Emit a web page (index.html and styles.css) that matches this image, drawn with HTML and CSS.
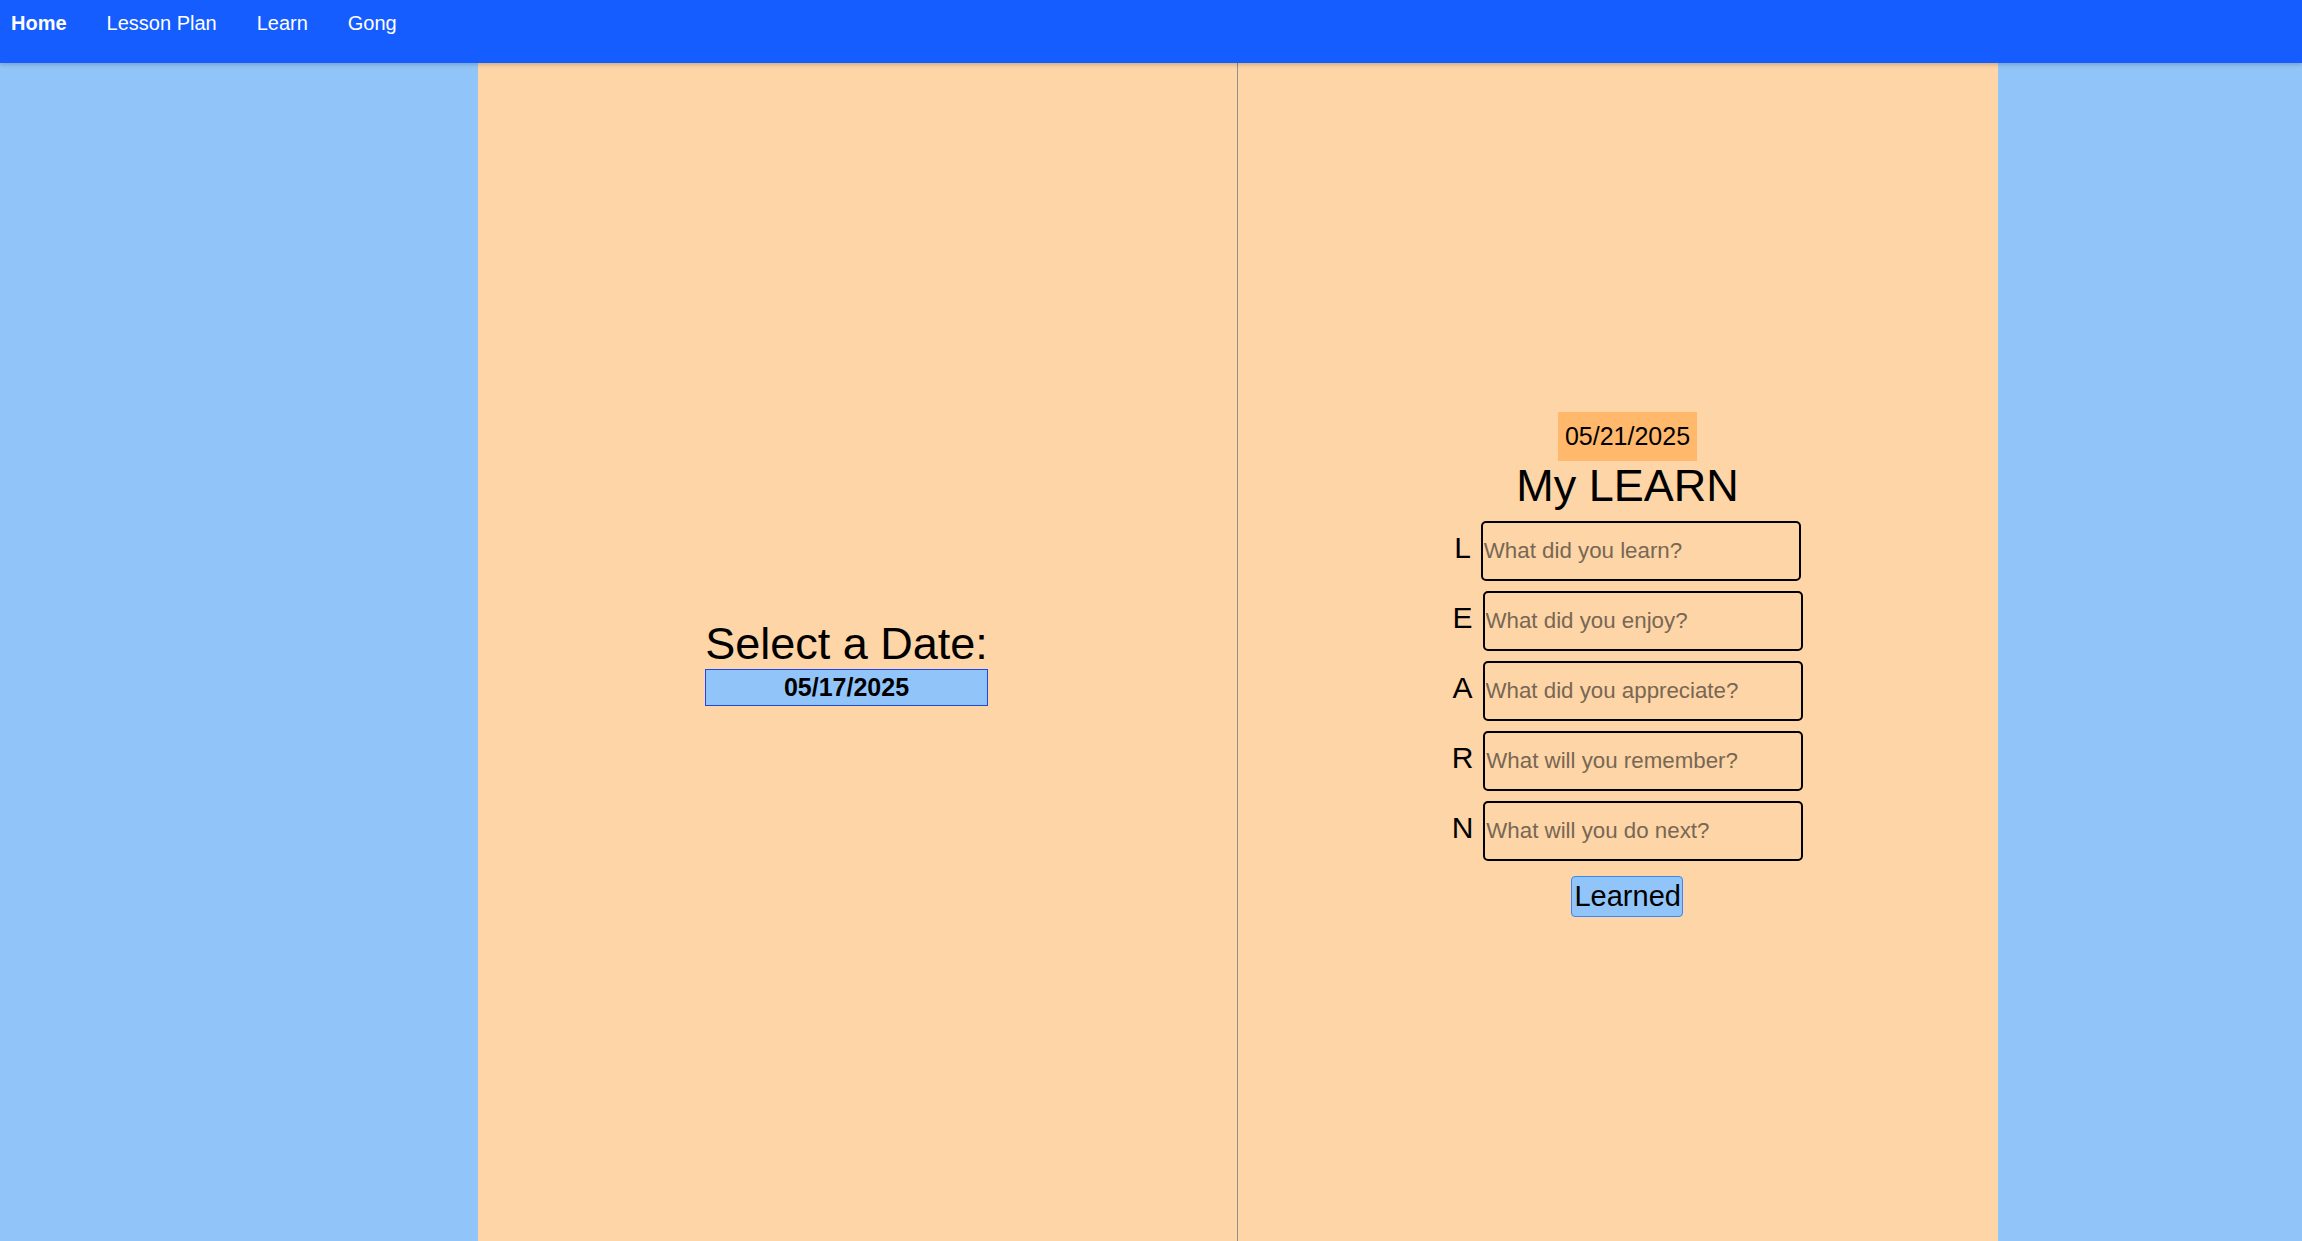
FILE: index.html
```html
<!DOCTYPE html>
<html lang="en">
<head>
<meta charset="utf-8">
<title>My LEARN</title>
<link rel="stylesheet" href="styles.css">
</head>
<body>
<nav class="topnav">
  <a class="nav-link active" href="#">Home</a>
  <a class="nav-link" href="#">Lesson Plan</a>
  <a class="nav-link" href="#">Learn</a>
  <a class="nav-link" href="#">Gong</a>
</nav>
<main class="layout">
  <div class="sheet">
    <section class="panel panel-left">
      <div class="picker">
        <div class="picker-title">Select a Date:</div>
        <input class="date-input" type="text" value="05/17/2025" readonly>
      </div>
    </section>
    <section class="panel panel-right">
      <div class="learn">
        <div class="date-badge">05/21/2025</div>
        <h1 class="learn-title">My LEARN</h1>
        <div class="rows">
          <div class="row"><span class="letter">L</span><input class="field" type="text" placeholder="What did you learn?"></div>
          <div class="row"><span class="letter">E</span><input class="field" type="text" placeholder="What did you enjoy?"></div>
          <div class="row"><span class="letter">A</span><input class="field" type="text" placeholder="What did you appreciate?"></div>
          <div class="row"><span class="letter">R</span><input class="field" type="text" placeholder="What will you remember?"></div>
          <div class="row"><span class="letter">N</span><input class="field" type="text" placeholder="What will you do next?"></div>
        </div>
        <button class="learned-btn" type="button">Learned</button>
      </div>
    </section>
  </div>
</main>
</body>
</html>
```

FILE: styles.css
```css
* { box-sizing: border-box; }

html, body {
  margin: 0;
  padding: 0;
  height: 100%;
}

body {
  font-family: "Liberation Sans", Arial, sans-serif;
  background: #91c5fa;
  color: #000;
  overflow: hidden;
}

.topnav {
  position: relative;
  z-index: 2;
  height: 63px;
  background: #165dff;
  display: flex;
  align-items: flex-start;
  gap: 40px;
  padding: 12px 11px 0;
  box-shadow: 0 2px 4px rgba(0, 0, 0, 0.18);
}

.nav-link {
  color: #fff;
  text-decoration: none;
  font-size: 20px;
  line-height: 23px;
}

.nav-link.active {
  font-weight: bold;
}

.layout {
  height: calc(100vh - 63px);
  display: grid;
  grid-template-columns: 478px 1520px 1fr;
}

.sheet {
  grid-column: 2;
  display: grid;
  grid-template-columns: 760px 760px;
  background: #fed5a6;
}

.panel {
  display: flex;
  align-items: center;
  justify-content: center;
  padding-top: 25px;
}

.panel-left {
  border-right: 1px solid #8f8f8f;
  padding-right: 22px;
  padding-top: 20px;
}

.panel-right {
  padding-left: 19px;
}

.picker {
  display: flex;
  flex-direction: column;
  align-items: center;
}

.picker-title {
  font-size: 45px;
  line-height: 51px;
}

.date-input {
  width: 283px;
  height: 37px;
  margin: 0;
  padding: 0 2px;
  border: 1px solid #1d47e8;
  background: #91c5fa;
  font-family: "Liberation Sans", Arial, sans-serif;
  font-size: 25px;
  font-weight: bold;
  color: #000;
  text-align: center;
  outline: none;
}

.learn {
  display: flex;
  flex-direction: column;
  align-items: center;
}

.date-badge {
  background: #ffb86c;
  font-size: 25px;
  line-height: 29px;
  padding: 10px 7px;
}

.learn-title {
  margin: 0;
  font-size: 45px;
  line-height: 50px;
  font-weight: normal;
}

.rows {
  margin-top: 10px;
  display: flex;
  flex-direction: column;
  align-items: center;
  gap: 10px;
}

.row {
  display: flex;
  align-items: baseline;
  gap: 10px;
}

.letter {
  font-size: 30px;
  line-height: 34px;
}

.field {
  width: 320px;
  height: 60px;
  margin: 0;
  padding: 1px 1px;
  border: 2px solid #000;
  border-radius: 5px;
  background: transparent;
  font-family: "Liberation Sans", Arial, sans-serif;
  font-size: 22.3px;
  color: #000;
  outline: none;
}

.field::placeholder {
  color: #776754;
  opacity: 1;
}

.learned-btn {
  margin-top: 15px;
  height: 41px;
  width: 112px;
  padding: 0 2px;
  border: 1px solid #3b86f2;
  border-radius: 4px;
  background: #91c5fa;
  font-family: "Liberation Sans", Arial, sans-serif;
  font-size: 29px;
  line-height: 33px;
  color: #000;
}
```
